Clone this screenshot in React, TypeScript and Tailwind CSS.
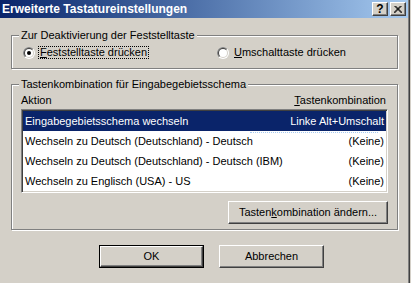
import React from "react";

const font = { fontFamily: '"Liberation Sans", Arial, sans-serif' };

function Radio({ checked, id }: { checked: boolean; id: string }) {
  return (
    <svg width="12" height="12" viewBox="0 0 12 12" className="shrink-0">
      <defs>
        <clipPath id={id}>
          <polygon points="0,0 12,0 0,12" />
        </clipPath>
      </defs>
      <circle cx="6" cy="6" r="6" fill="#ffffff" />
      <circle cx="6" cy="6" r="6" fill="#808080" clipPath={`url(#${id})`} />
      <circle cx="6" cy="6" r="5" fill="#d4d0c8" />
      <circle cx="6" cy="6" r="5" fill="#404040" clipPath={`url(#${id})`} />
      <circle cx="6" cy="6" r="4" fill="#ffffff" />
      {checked && <circle cx="6" cy="6" r="2" fill="#000000" />}
    </svg>
  );
}

function TitleButton({ children }: { children: React.ReactNode }) {
  return (
    <div className="w-[16px] h-[14px] bg-[#d4d0c8] border border-t-white border-l-white border-r-[#404040] border-b-[#404040] shadow-[inset_-1px_-1px_0_#808080] flex items-center justify-center">
      {children}
    </div>
  );
}

const rows = [
  ["Eingabegebietsschema wechseln", "Linke Alt+Umschalt"],
  ["Wechseln zu Deutsch (Deutschland) - Deutsch", "(Keine)"],
  ["Wechseln zu Deutsch (Deutschland) - Deutsch (IBM)", "(Keine)"],
  ["Wechseln zu Englisch (USA) - US", "(Keine)"],
];

export default function App() {
  return (
    <div
      className="w-[411px] h-[283px] bg-[#d4d0c8] flex flex-row overflow-hidden text-[11px] leading-[13px] text-black"
      style={font}
    >
      <div className="w-[408px] flex flex-col">
        {/* Title bar */}
        <div className="h-[18px] bg-gradient-to-r from-[#0a246a] to-[#a6caf0] flex items-center pl-[2px] pr-[2px]">
          <span className="text-white font-bold text-[12px] flex-1">Erweiterte Tastatureinstellungen</span>
          <div className="flex gap-[2px]">
            <TitleButton>
              <span className="font-bold text-[12px] leading-[12px] text-black">?</span>
            </TitleButton>
            <TitleButton>
              <svg width="8" height="7" viewBox="0 0 8 7">
                <path d="M0.5 0 L7.5 7 M1.5 0 L8.5 7 M7.5 0 L0.5 7 M6.5 0 L-0.5 7" stroke="#000" strokeWidth="1" />
              </svg>
            </TitleButton>
          </div>
        </div>

        <div className="pl-[11px] flex flex-col">
          {/* Group 1 */}
          <div className="relative mt-[17px] w-[387px] h-[34px] border border-[#808080] shadow-[inset_1px_1px_0_#ffffff,1px_1px_0_#ffffff] pt-[10px] pl-[11px]">
            <span className="absolute left-[7px] top-[-7px] bg-[#d4d0c8] px-[2px]">
              Zur Deaktivierung der Feststelltaste
            </span>
            <div className="flex items-center h-[13px]">
              <div className="w-[194px] flex items-center">
                <Radio checked id="r1" />
                <span className="ml-[3px] px-[1px] border border-dotted border-black leading-[11px]">
                  <u>F</u>eststelltaste drücken
                </span>
              </div>
              <div className="flex items-center">
                <Radio checked={false} id="r2" />
                <span className="ml-[5px]">
                  <u>U</u>mschalttaste drücken
                </span>
              </div>
            </div>
          </div>

          {/* Group 2 */}
          <div className="relative mt-[15px] w-[387px] h-[146px] border border-[#808080] shadow-[inset_1px_1px_0_#ffffff,1px_1px_0_#ffffff] pt-[9px] px-[9px] flex flex-col">
            <span className="absolute left-[7px] top-[-7px] bg-[#d4d0c8] px-[2px]">
              Tastenkombination für Eingabegebietsschema
            </span>
            <div className="flex justify-between h-[13px] pr-[2px]">
              <span>Aktion</span>
              <span>
                <u>T</u>astenkombination
              </span>
            </div>
            <div className="mt-[2px] h-[84px] bg-white border border-t-[#808080] border-l-[#808080] border-b-white border-r-white shadow-[inset_1px_1px_0_#404040,inset_-1px_-1px_0_#d4d0c8] p-[1px] flex flex-col">
              {rows.map(([a, b], i) => (
                <div
                  key={i}
                  className={
                    i === 0
                      ? "h-[20px] flex items-center justify-between px-[2px] bg-[#0a246a] text-white"
                      : "relative h-[20px] flex items-center justify-between px-[2px]"
                  }
                >
                  <span>{a}</span>
                  <span>{b}</span>
                  {i === 1 && (
                    <span className="absolute left-[227px] right-[8px] top-[1px] border-t border-dotted border-[#a6caf0]" />
                  )}
                </div>
              ))}
            </div>
            <div className="mt-[8px] flex justify-end">
              <button className="w-[160px] h-[23px] bg-[#d4d0c8] border border-t-white border-l-white border-r-[#404040] border-b-[#404040] shadow-[inset_-1px_-1px_0_#808080] flex items-center justify-center">
                <span>
                  Tasten<u>k</u>ombination ändern...
                </span>
              </button>
            </div>
          </div>

          {/* Bottom buttons */}
          <div className="mt-[15px] pl-[88px] flex gap-[15px]">
            <button className="w-[105px] h-[23px] bg-[#d4d0c8] border border-black flex">
              <span className="flex-1 flex items-center justify-center border border-t-white border-l-white border-r-[#404040] border-b-[#404040] shadow-[inset_-1px_-1px_0_#808080]">
                OK
              </span>
            </button>
            <button className="w-[105px] h-[23px] bg-[#d4d0c8] border border-t-white border-l-white border-r-[#404040] border-b-[#404040] shadow-[inset_-1px_-1px_0_#808080] flex items-center justify-center">
              Abbrechen
            </button>
          </div>
        </div>
      </div>
      {/* Right window border */}
      <div className="w-[1px] bg-[#808080]" />
      <div className="w-[1px] bg-[#404040]" />
      <div className="w-[1px] bg-[#d4d0c8]" />
    </div>
  );
}
